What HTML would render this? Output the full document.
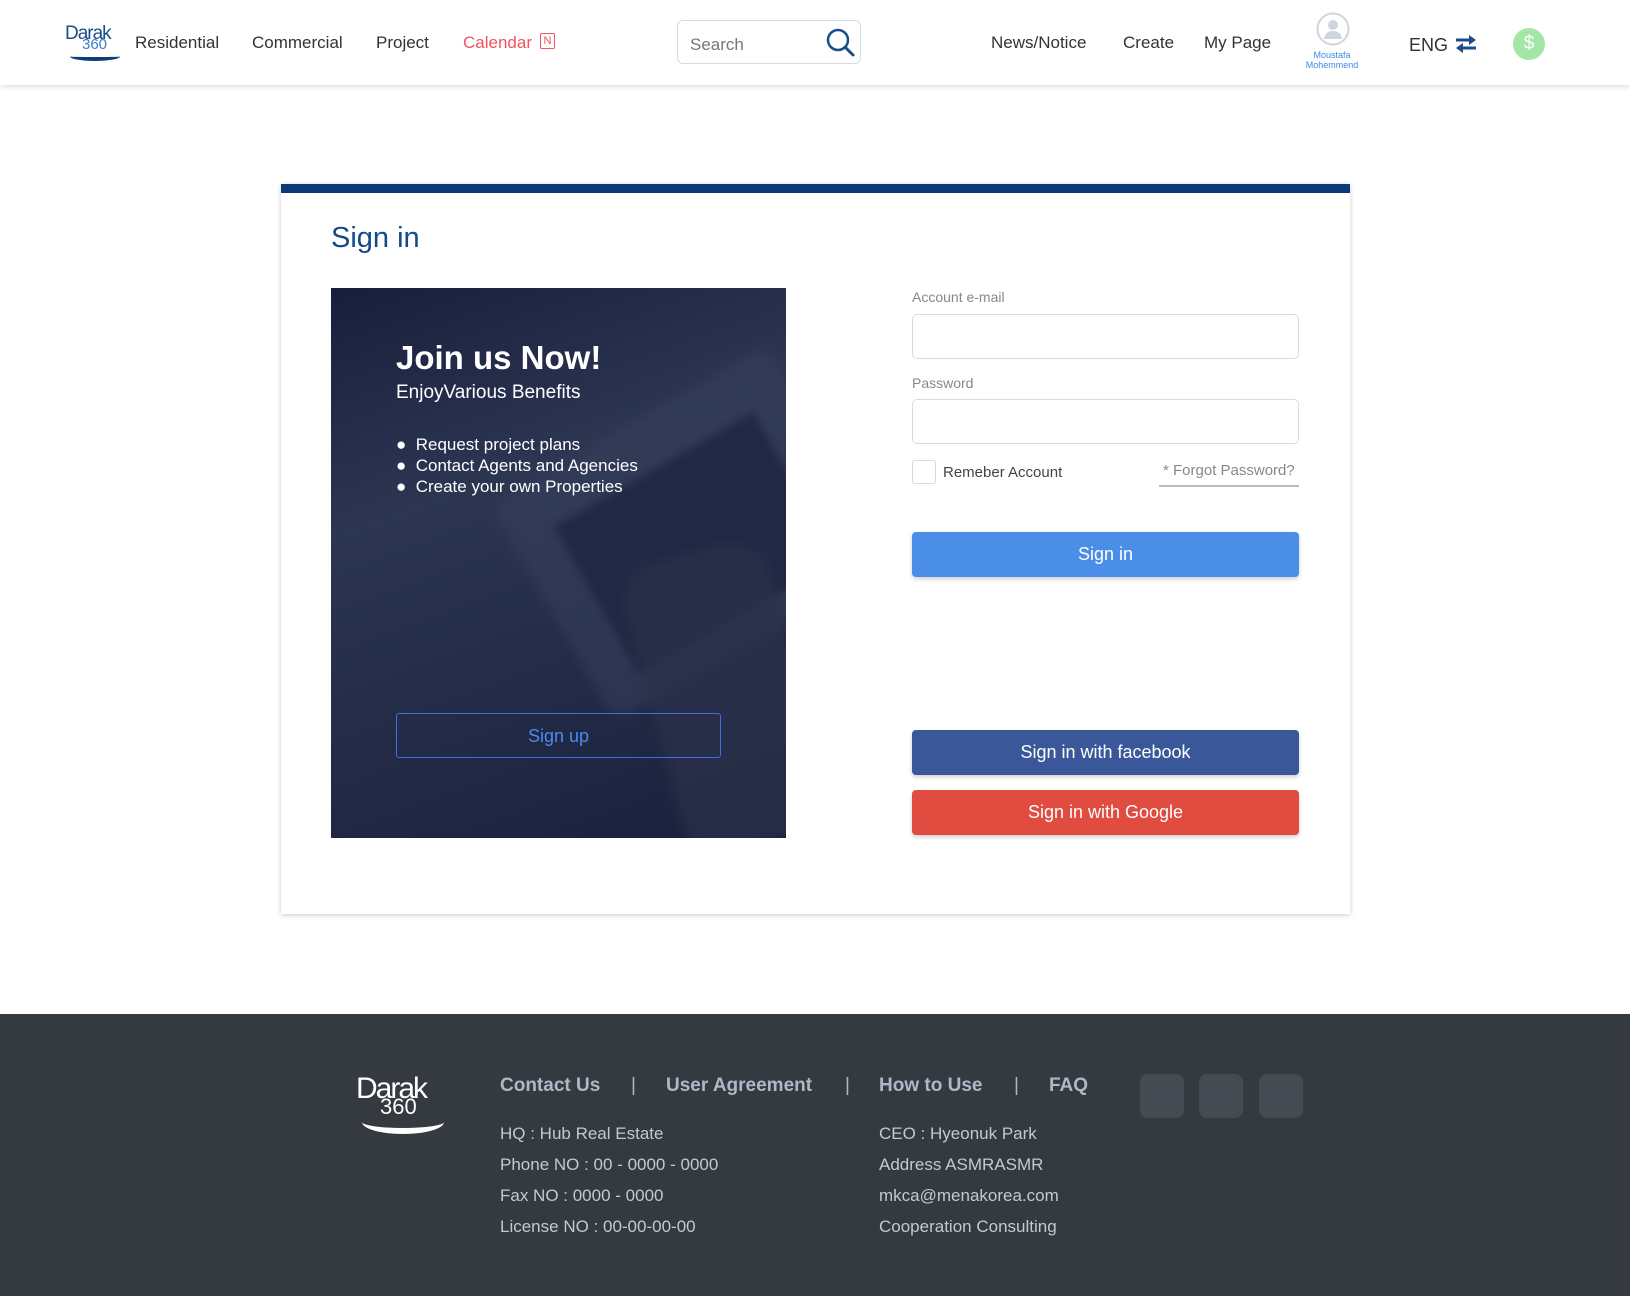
<!DOCTYPE html>
<html><head><meta charset="utf-8"><style>
*{margin:0;padding:0;box-sizing:border-box}
body{width:1630px;height:1296px;position:relative;background:#fff;font-family:"Liberation Sans",Arial,sans-serif;overflow:hidden}
.a{position:absolute;white-space:nowrap}
.hdr{position:absolute;left:0;top:0;width:1630px;height:85px;background:#fff;box-shadow:0 2px 5px rgba(0,0,0,.12)}
.nav{font-size:17px;color:#333;top:33px}
.ft{color:#c3c9d2;font-size:17px}
.fl{color:#aeb8c6;font-size:19px;font-weight:bold;top:1075px}
.sq{position:absolute;top:1074px;width:44px;height:44px;border-radius:8px;background:#464b53}
.btn{position:absolute;left:912px;width:387px;height:45px;border-radius:4px;color:#fff;font-size:18px;text-align:center;line-height:45px;box-shadow:0 2px 4px rgba(0,0,0,.2)}
.inp{position:absolute;left:912px;width:387px;height:45px;border:1px solid #d3dce8;border-radius:5px}
.lbl{font-size:14px;color:#888}
</style></head><body>
<div class="hdr"></div>
<div class="a" style="left:65px;top:23px;font-size:19px;color:#1a4d8a;letter-spacing:-1px">Darak</div>
<div class="a" style="left:82px;top:36px;font-size:15px;color:#3b7fd0">360</div>
<div class="a" style="left:70px;top:52px;width:50px;height:9px;border-radius:50%;border-bottom:4px solid #0f3e75"></div>
<div class="a nav" style="left:135px">Residential</div>
<div class="a nav" style="left:252px">Commercial</div>
<div class="a nav" style="left:376px">Project</div>
<div class="a nav" style="left:463px;color:#f0545e">Calendar</div>
<div class="a" style="left:540px;top:33px;width:15px;height:16px;border:1px solid #f0545e;border-radius:2px;color:#f0545e;font-size:11px;text-align:center;line-height:14px">N</div>
<div class="a" style="left:677px;top:20px;width:184px;height:44px;border:1px solid #d3dce8;border-radius:6px"></div>
<div class="a" style="left:690px;top:35px;font-size:17px;color:#777">Search</div>
<svg class="a" style="left:825px;top:27px" width="32" height="32" viewBox="0 0 32 32"><circle cx="13" cy="13" r="10" fill="none" stroke="#1a4d8a" stroke-width="2.5"/><path d="M20 20 L28 28" stroke="#1a4d8a" stroke-width="3" stroke-linecap="round"/></svg>
<div class="a nav" style="left:991px">News/Notice</div>
<div class="a nav" style="left:1123px">Create</div>
<div class="a nav" style="left:1204px">My Page</div>
<svg class="a" style="left:1316px;top:12px" width="34" height="34" viewBox="0 0 34 34"><circle cx="17" cy="17" r="15.5" fill="#fff" stroke="#cdd5df" stroke-width="2"/><circle cx="17" cy="13" r="5" fill="#cdd5df"/><path d="M8 27 Q9 19 17 19 Q25 19 26 27 Z" fill="#cdd5df"/></svg>
<div class="a" style="left:1290px;top:50px;width:84px;text-align:center;font-size:9px;line-height:10px;color:#3b8ae8">Moustafa<br>Mohemmend</div>
<div class="a nav" style="left:1409px;top:35px;font-size:18px">ENG</div>
<svg class="a" style="left:1455px;top:34px" width="22" height="20" viewBox="0 0 22 20"><path d="M1 6H17" stroke="#1a4d8a" stroke-width="3"/><path d="M14 1L21 6L14 11Z" fill="#1a4d8a"/><path d="M21 14H5" stroke="#1a4d8a" stroke-width="3"/><path d="M8 9L1 14L8 19Z" fill="#1a4d8a"/></svg>
<div class="a" style="left:1513px;top:28px;width:32px;height:32px;border-radius:50%;background:#a3e6a5;color:#fff;text-align:center;line-height:32px;font-size:19px">$</div>

<div class="a" style="left:281px;top:184px;width:1069px;height:730px;background:#fff;border-top:9px solid #0c3a78;box-shadow:0 1px 5px rgba(0,0,0,.2)"></div>
<div class="a" style="left:331px;top:222px;font-size:29px;color:#124a8c">Sign in</div>
<div class="a" style="left:331px;top:288px;width:455px;height:550px;background:linear-gradient(160deg,#1a2240 0%,#3a4560 35%,#2e3852 60%,#1c2440 100%);overflow:hidden">
 <div class="a" style="left:200px;top:120px;width:320px;height:250px;background:#4a5570;transform:rotate(-30deg);border-radius:20px;opacity:.55;filter:blur(6px)"></div>
 <div class="a" style="left:250px;top:170px;width:230px;height:170px;background:#232b48;transform:rotate(-30deg);opacity:.8;filter:blur(4px)"></div>
 <div class="a" style="left:320px;top:260px;width:150px;height:300px;background:#3a3f55;border-radius:40px;transform:rotate(-15deg);opacity:.7;filter:blur(6px)"></div>
 <div class="a" style="left:0;top:0;width:455px;height:550px;background:rgba(20,26,55,.35)"></div>
</div>
<div class="a" style="left:396px;top:339px;font-size:33px;font-weight:bold;color:#fff">Join us Now!</div>
<div class="a" style="left:396px;top:382px;font-size:19px;color:#fff">EnjoyVarious Benefits</div>
<div class="a" style="left:396px;top:434px;font-size:17px;color:#fff;line-height:21px">● &nbsp;Request project plans<br>● &nbsp;Contact Agents and Agencies<br>● &nbsp;Create your own Properties</div>
<div class="a" style="left:396px;top:713px;width:325px;height:45px;border:1px solid #3b70e0;border-radius:3px;color:#4a8af0;font-size:18px;text-align:center;line-height:45px">Sign up</div>

<div class="a lbl" style="left:912px;top:289px">Account e-mail</div>
<div class="inp" style="top:314px"></div>
<div class="a lbl" style="left:912px;top:375px">Password</div>
<div class="inp" style="top:399px"></div>
<div class="a" style="left:912px;top:460px;width:24px;height:24px;border:1px solid #d3dce8;border-radius:3px"></div>
<div class="a" style="left:943px;top:464px;font-size:15px;color:#444">Remeber Account</div>
<div class="a" style="left:1163px;top:462px;font-size:15px;color:#888">* Forgot Password?</div>
<div class="a" style="left:1159px;top:485px;width:140px;height:2px;background:#bbb"></div>
<div class="btn" style="top:532px;background:#4a8ee8">Sign in</div>
<div class="btn" style="top:730px;background:#3a5899">Sign in with facebook</div>
<div class="btn" style="top:790px;background:#e04c40">Sign in with Google</div>

<div class="a" style="left:0;top:1014px;width:1630px;height:282px;background:#353940"></div>
<div class="a" style="left:356px;top:1072px;font-size:30px;color:#fff;letter-spacing:-2px">Darak</div>
<div class="a" style="left:380px;top:1094px;font-size:22px;color:#fff">360</div>
<div class="a" style="left:362px;top:1110px;width:82px;height:24px;border-radius:50%;border-bottom:6px solid #fff"></div>
<div class="a fl" style="left:500px">Contact Us</div>
<div class="a fl" style="left:631px;font-weight:normal">|</div>
<div class="a fl" style="left:666px">User Agreement</div>
<div class="a fl" style="left:845px;font-weight:normal">|</div>
<div class="a fl" style="left:879px">How to Use</div>
<div class="a fl" style="left:1014px;font-weight:normal">|</div>
<div class="a fl" style="left:1049px">FAQ</div>
<div class="sq" style="left:1140px"></div><div class="sq" style="left:1199px"></div><div class="sq" style="left:1259px"></div>
<div class="a ft" style="left:500px;top:1118px;line-height:31px">HQ : Hub Real Estate<br>Phone NO : 00 - 0000 - 0000<br>Fax NO : 0000 - 0000<br>License NO : 00-00-00-00</div>
<div class="a ft" style="left:879px;top:1118px;line-height:31px">CEO : Hyeonuk Park<br>Address ASMRASMR<br>mkca@menakorea.com<br>Cooperation Consulting</div>
</body></html>
